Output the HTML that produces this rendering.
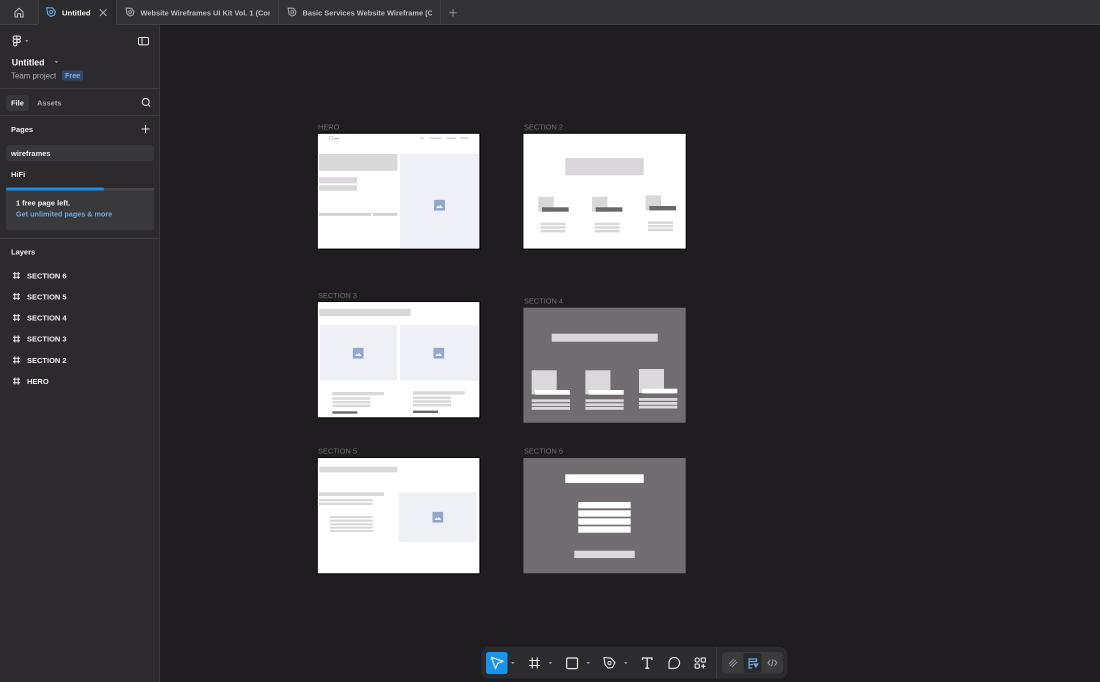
<!DOCTYPE html>
<html><head><meta charset="utf-8"><style>
html,body{margin:0;padding:0;width:1100px;height:682px;overflow:hidden;background:#1f1d20}
svg{display:block;position:absolute;left:0;top:0;filter:blur(.3px)}
text{font-family:"Liberation Sans",sans-serif}
.t{font-weight:700;fill:#f0f0f0}
.k{font-size:7.4px;fill:#6e6d70}
</style></head><body>
<svg width="1100" height="682" viewBox="0 0 1100 682" xmlns="http://www.w3.org/2000/svg">
<defs>
<clipPath id="c1"><rect x="140" y="0" width="130" height="24"/></clipPath>
<clipPath id="c2"><rect x="300" y="0" width="132" height="24"/></clipPath>
<symbol id="img" viewBox="0 0 11 11"><rect width="11" height="11" rx="1" fill="#93a8c9"/><path d="M2 8.3 4 5.6 5.2 7 6.5 5.2 9 8.3z" fill="#eef1f7"/></symbol>
<symbol id="leaf" viewBox="0 0 12 12"><path d="M1.3 1.3 7.8 1.6 10.8 5.6 9.6 9.4 5.6 10.8 2.4 8.2z" fill="none" stroke="currentColor" stroke-width="1.3" stroke-linejoin="round"/><circle cx="6.2" cy="6" r="1.7" fill="none" stroke="currentColor" stroke-width="1.1"/></symbol>
<symbol id="hash" viewBox="0 0 8 8"><path d="M2.3.5v7M5.7.5v7M.5 2.3h7M.5 5.7h7" stroke="#ececec" stroke-width="1" fill="none"/></symbol>
</defs>

<!-- tab bar -->
<rect x="0" y="0" width="1100" height="25" fill="#333235"/>
<rect x="0" y="24" width="1100" height="1" fill="#424144"/>
<rect x="38.5" y="0" width="78" height="25" fill="#2b2a2d"/>
<path d="M38.5 0v24M116.5 0v24M278.5 0v24M440.5 0v24" stroke="#414043"/>
<path d="M15 12 19 8.3 23 12V17H20.6V13.8H17.4V17H15z" fill="none" stroke="#c4c4c6" stroke-width="1"/>
<use href="#leaf" x="45.5" y="6.5" width="11" height="11" color="#5aa6dc"/>
<text x="62" y="15.5" class="t" font-size="7.7" style="fill:#f4f4f4">Untitled</text>
<path d="M99.8 9.3 106.5 16M106.5 9.3 99.8 16" stroke="#b5b5b7" stroke-width="1" fill="none"/>
<use href="#leaf" x="125" y="7" width="10" height="10" color="#a8a8aa"/>
<g clip-path="url(#c1)"><text x="140.5" y="15.5" font-size="7.4" font-weight="700" style="fill:#bcbcbe">Website Wireframes UI Kit Vol. 1 (Community)</text></g>
<use href="#leaf" x="287" y="7" width="10" height="10" color="#a8a8aa"/>
<g clip-path="url(#c2)"><text x="302.5" y="15.5" font-size="7.4" font-weight="700" style="fill:#bcbcbe">Basic Services Website Wireframe (Community)</text></g>
<path d="M453 9v7.5M449.2 12.8h7.5" stroke="#8d8d8f" stroke-width="1"/>

<!-- sidebar -->
<rect x="0" y="25" width="159.5" height="657" fill="#2c2a2d"/>
<rect x="159" y="25" width="1" height="657" fill="#3b3a3d"/>
<rect x="0" y="88" width="159" height="1" fill="#3b3a3d"/>
<rect x="0" y="115" width="159" height="1" fill="#3b3a3d"/>
<rect x="0" y="238" width="159" height="1" fill="#3f3e41"/>
<!-- figma logo -->
<g fill="none" stroke="#ececec" stroke-width="1"><path d="M16.8 36h-2a1.65 1.65 0 0 0 0 3.3h2zM16.8 36h2a1.65 1.65 0 0 1 0 3.3h-2zM16.8 39.3h-2a1.65 1.65 0 0 0 0 3.3h2z"/><circle cx="18.6" cy="41" r="1.65"/><path d="M16.8 42.6h-2a1.65 1.65 0 1 0 2 1.65z"/></g>
<path d="M25.2 40.2h3.2L26.8 42z" fill="#b9b9bb"/>
<rect x="138.5" y="37.5" width="10" height="7.4" rx="1.5" fill="none" stroke="#ededed" stroke-width="1"/><path d="M142 37.5v7.4" stroke="#ededed"/>
<text x="11.8" y="65.3" class="t" font-size="8.8" style="fill:#f6f6f6">Untitled</text>
<path d="M54.8 61.3h3.4L56.5 63z" fill="#b9b9bb"/>
<text x="11" y="78.3" font-size="7.9" style="fill:#b0b0b2">Team project</text>
<rect x="62" y="70.5" width="21" height="10" rx="2" fill="#33476b"/>
<text x="65" y="78.1" font-size="7.2" font-weight="700" style="fill:#7eaee8">Free</text>
<!-- tabs -->
<rect x="6" y="95" width="23" height="16" rx="3" fill="#373639"/>
<text x="11" y="105.3" class="t" font-size="7.5">File</text>
<text x="37" y="105.3" font-size="7.5" font-weight="700" style="fill:#a8a8aa">Assets</text>
<circle cx="145.7" cy="102" r="3.5" fill="none" stroke="#e6e6e6" stroke-width="1"/><path d="M148.3 104.6 150.2 106.5" stroke="#e6e6e6"/>
<!-- pages -->
<text x="11" y="132.2" class="t" font-size="7.5">Pages</text>
<path d="M145.5 125v8M141.5 129h8" stroke="#e8e8e8" stroke-width="1"/>
<rect x="6" y="145" width="148" height="16" rx="3" fill="#373639"/>
<text x="11" y="156" class="t" font-size="7.5">wireframes</text>
<text x="11" y="177.2" class="t" font-size="7.5">HiFi</text>
<rect x="6" y="188" width="148" height="42" rx="3" fill="#39383b"/>
<path d="M6 190.5v-.5a2 2 0 0 1 2-2h146v2.5z" fill="#47464a"/>
<rect x="6" y="187.5" width="98" height="3" rx="1.2" fill="#1b8ce0"/>
<text x="16" y="205.7" class="t" font-size="7.4">1 free page left.</text>
<text x="16" y="216.7" font-size="7.25" font-weight="700" style="fill:#6fa9e0">Get unlimited pages &amp; more</text>
<!-- layers -->
<text x="11" y="254.7" class="t" font-size="7.5">Layers</text>
<use href="#hash" x="12.5" y="271.5" width="8" height="8"/><text x="27" y="278.3" class="t" font-size="7.5">SECTION 6</text>
<use href="#hash" x="12.5" y="292.5" width="8" height="8"/><text x="27" y="299.4" class="t" font-size="7.5">SECTION 5</text>
<use href="#hash" x="12.5" y="313.5" width="8" height="8"/><text x="27" y="320.5" class="t" font-size="7.5">SECTION 4</text>
<use href="#hash" x="12.5" y="335" width="8" height="8"/><text x="27" y="341.7" class="t" font-size="7.5">SECTION 3</text>
<use href="#hash" x="12.5" y="356" width="8" height="8"/><text x="27" y="362.8" class="t" font-size="7.5">SECTION 2</text>
<use href="#hash" x="12.5" y="377" width="8" height="8"/><text x="27" y="384" class="t" font-size="7.5">HERO</text>

<!-- labels -->
<text x="318" y="129.3" class="k">HERO</text>
<text x="524" y="129.3" class="k">SECTION 2</text>
<text x="318" y="297.8" class="k">SECTION 3</text>
<text x="524" y="303.3" class="k">SECTION 4</text>
<text x="318" y="453.5" class="k">SECTION 5</text>
<text x="524" y="453.5" class="k">SECTION 6</text>

<!-- frame shadows -->
<rect x="316.8" y="132.8" width="163.8" height="117" fill="#000"/>
<rect x="522.6" y="132.8" width="164" height="117" fill="#000"/>
<rect x="316.8" y="301" width="163.8" height="117.4" fill="#000"/>
<rect x="316.8" y="457" width="163.8" height="117.4" fill="#000"/>

<!-- HERO -->
<rect x="317.8" y="133.8" width="161.6" height="114.8" fill="#fff"/>
<rect x="319" y="154" width="78.3" height="16.7" fill="#d9d7d9"/>
<rect x="319" y="177.3" width="38" height="6" fill="#d9d7d9"/>
<rect x="319" y="185.3" width="38" height="5.4" fill="#d9d7d9"/>
<rect x="319" y="213" width="52" height="2.8" fill="#d2d0d2"/>
<rect x="372.7" y="213" width="24.6" height="2.8" fill="#d2d0d2"/>
<rect x="400" y="154" width="78.7" height="94.6" fill="#eff0f6"/>
<use href="#img" x="434" y="199.7" width="11" height="11"/>
<rect x="329.5" y="136.5" width="3.5" height="3.5" fill="none" stroke="#b5b8c8" stroke-width=".5"/>
<rect x="334" y="138" width="5" height="1.2" fill="#b5b8cc"/>
<rect x="420" y="137.5" width="4" height="1.2" fill="#c4c5d0"/><rect x="429.5" y="137.5" width="12" height="1.2" fill="#c4c5d0"/><rect x="446.5" y="137.5" width="9.5" height="1.2" fill="#c4c5d0"/><rect x="460.5" y="137.5" width="8" height="1.2" fill="#c4c5d0"/>

<!-- SECTION 2 -->
<rect x="523.4" y="133.8" width="162.3" height="114.8" fill="#fff"/>
<rect x="565.3" y="158" width="78.4" height="17.3" fill="#d9d7d9"/>
<g fill="#d9d7d9">
<rect x="538.3" y="196.7" width="15.4" height="15"/><rect x="542" y="207.3" width="26.7" height="4.4" fill="#6a686a"/><rect x="540.7" y="222.7" width="25" height="2.4"/><rect x="540.7" y="226.3" width="25" height="2.4"/><rect x="540.7" y="230" width="25" height="2.4"/>
<rect x="592" y="196.7" width="15.4" height="15"/><rect x="595.7" y="207.3" width="26.7" height="4.4" fill="#6a686a"/><rect x="594.4" y="222.7" width="25" height="2.4"/><rect x="594.4" y="226.3" width="25" height="2.4"/><rect x="594.4" y="230" width="25" height="2.4"/>
<rect x="645.6" y="195.4" width="15.4" height="15"/><rect x="649.3" y="206" width="26.7" height="4.4" fill="#6a686a"/><rect x="648" y="221.4" width="25" height="2.4"/><rect x="648" y="225" width="25" height="2.4"/><rect x="648" y="228.7" width="25" height="2.4"/>
</g>

<!-- SECTION 3 -->
<rect x="317.8" y="302" width="161.6" height="115.3" fill="#fff"/>
<rect x="319.3" y="308.7" width="91.4" height="7.3" fill="#d9d7d9"/>
<rect x="320" y="325" width="77" height="55.7" fill="#eff0f6"/>
<rect x="400" y="325" width="78.3" height="55.7" fill="#eff0f6"/>
<use href="#img" x="352.7" y="347.7" width="11" height="11"/>
<use href="#img" x="433.3" y="347.7" width="11" height="11"/>
<g fill="#d9d7d9">
<rect x="332.3" y="392" width="51.7" height="3.3"/><rect x="332.3" y="397.3" width="38" height="2.4"/><rect x="332.3" y="401" width="38" height="2.4"/><rect x="332.3" y="404.7" width="38" height="2.4"/><rect x="332.3" y="411.3" width="25" height="2.4" fill="#6a686a"/>
<rect x="413" y="391.3" width="51.7" height="3.3"/><rect x="413" y="396.6" width="38" height="2.4"/><rect x="413" y="400.3" width="38" height="2.4"/><rect x="413" y="404" width="38" height="2.4"/><rect x="413" y="410.6" width="25" height="2.4" fill="#6a686a"/>
</g>

<!-- SECTION 4 -->
<rect x="523.4" y="307.7" width="162.3" height="115" fill="#716c70"/>
<g fill="#dcd9dc">
<rect x="551.7" y="333.7" width="106" height="8"/>
<rect x="531.7" y="370.3" width="25" height="24"/><rect x="585.4" y="370.3" width="25" height="24"/><rect x="639" y="369" width="25" height="24"/>
<rect x="531.7" y="399.3" width="38.3" height="2.8"/><rect x="531.7" y="403.3" width="38.3" height="2.8"/><rect x="531.7" y="407" width="38.3" height="2.8"/>
<rect x="585.4" y="399.3" width="38.3" height="2.8"/><rect x="585.4" y="403.3" width="38.3" height="2.8"/><rect x="585.4" y="407" width="38.3" height="2.8"/>
<rect x="639" y="398" width="38.3" height="2.8"/><rect x="639" y="402" width="38.3" height="2.8"/><rect x="639" y="405.7" width="38.3" height="2.8"/>
</g>
<g fill="#fff">
<rect x="535" y="390" width="35" height="4.7"/><rect x="588.7" y="390" width="35" height="4.7"/><rect x="642.3" y="388.7" width="35" height="4.7"/>
</g>

<!-- SECTION 5 -->
<rect x="317.8" y="458" width="161.6" height="115.3" fill="#fff"/>
<g fill="#d9d7d9">
<rect x="319.3" y="466.7" width="78" height="5.6"/>
<rect x="319" y="492.3" width="65" height="3.7"/>
<rect x="319" y="499" width="53.7" height="2.3"/><rect x="319" y="502.7" width="53.7" height="2.3"/>
<rect x="330" y="516" width="42.7" height="2"/><rect x="330" y="519.7" width="42.7" height="2"/><rect x="330" y="523.3" width="42.7" height="2"/><rect x="330" y="526.7" width="42.7" height="2"/><rect x="330" y="530" width="42.7" height="2"/>
</g>
<rect x="398.7" y="492.3" width="78" height="49.7" rx="2" fill="#eff0f6"/>
<use href="#img" x="432.3" y="511.7" width="11" height="11"/>

<!-- SECTION 6 -->
<rect x="523.4" y="458" width="162.3" height="115.3" fill="#716c70"/>
<g fill="#fff">
<rect x="565.3" y="474.3" width="78.4" height="8.7"/>
<rect x="578.3" y="502" width="52.4" height="6.3"/><rect x="578.3" y="510.3" width="52.4" height="6.4"/><rect x="578.3" y="518.3" width="52.4" height="6.4"/><rect x="578.3" y="526.3" width="52.4" height="6.4"/>
</g>
<rect x="574.3" y="550.7" width="60.4" height="7.3" fill="#dcd9dc"/>

<!-- toolbar -->
<rect x="481" y="647" width="306.5" height="31.5" rx="8" fill="#2c2b2e"/>
<rect x="486" y="652" width="21.5" height="22" rx="2.5" fill="#1a94ea"/>
<path d="M491.3 657.3 503 661.3 497.8 663.2 495.6 668.6z" fill="none" stroke="#fff" stroke-width="1.1" stroke-linejoin="round"/>
<g fill="#b8b8ba"><path d="M511 662.2h3.6l-1.8 1.8zM548.6 662.2h3.6l-1.8 1.8zM586.3 662.2h3.6l-1.8 1.8zM624 662.2h3.6l-1.8 1.8z"/></g>
<path d="M532.2 657.5v11M537.2 657.5v11M529.3 660.5h10.8M529.3 665.5h10.8" stroke="#ededed" stroke-width="1.1" fill="none"/>
<rect x="566.7" y="658" width="10.8" height="10.6" rx="1.3" fill="none" stroke="#ededed" stroke-width="1.2"/>
<path d="M604 657.5 611 658.2 615 662.5 612.5 667.5 608 668 605 664.5z" fill="none" stroke="#ededed" stroke-width="1.1"/><circle cx="609.5" cy="663" r="1.6" fill="none" stroke="#ededed" stroke-width="1"/>
<path d="M642.5 660v-2h9.4v2M647.2 658v10.2M645.2 668.2h4" fill="none" stroke="#ededed" stroke-width="1.3"/>
<path d="M674.2 657.5a5.4 5.4 0 0 1 0 10.8h-5.2v-5.4a5.3 5.3 0 0 1 5.2-5.4z" fill="none" stroke="#ededed" stroke-width="1.1"/>
<g fill="none" stroke="#ededed" stroke-width="1.1"><circle cx="697.2" cy="660" r="2.1"/><rect x="701.2" y="657.9" width="4.2" height="4.2" rx="1"/><rect x="695.1" y="664" width="4.2" height="4.2" rx="1"/><path d="M703.3 664v4.4M701.1 666.2h4.4"/></g>
<rect x="716" y="647" width="1" height="31" fill="#3c3b3e"/>
<rect x="722" y="652" width="61" height="21.5" rx="4" fill="#3b3a3d"/>
<rect x="743.5" y="653" width="18" height="20" rx="2.5" fill="#29282b"/>
<path d="M729 664 734 659M730 666 736 660M732 667 737 662" stroke="#8f8f91" stroke-width="1" fill="none"/>
<g fill="none" stroke="#6ba7e0" stroke-width="1.2"><path d="M753.5 659h-4.5v9h3M749 661.5h7.5V659h-3M749 664.5h4"/><path d="M754 664h3.8l-1.9 3z" fill="#6ba7e0"/></g>
<path d="M770.3 660 768 662.8 770.3 665.6M774.5 660 776.8 662.8 774.5 665.6M773.2 659.5 771.6 666" stroke="#a2a2a4" stroke-width="1" fill="none"/>
</svg>
</body></html>
